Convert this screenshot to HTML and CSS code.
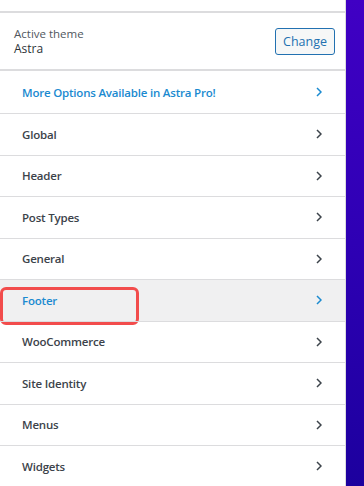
FILE: index.html
```html
<!DOCTYPE html>
<html>
<head>
<meta charset="utf-8">
<link rel="stylesheet" href="styles.css">
</head>
<body>
<div class="frame">
  <div class="panel">
    <div class="top-space"></div>
    <div class="theme">
      <div class="theme-info">
        <div class="theme-label">Active theme</div>
        <div class="theme-name">Astra</div>
      </div>
      <button class="change-btn">Change</button>
    </div>
    <ul class="menu">
      <li class="item pro first"><span>More Options Available in Astra Pro!</span><svg class="chev" viewBox="0 0 6 10"><path d="M1 1l4 4-4 4"/></svg></li>
      <li class="item"><span>Global</span><svg class="chev" viewBox="0 0 6 10"><path d="M1 1l4 4-4 4"/></svg></li>
      <li class="item"><span>Header</span><svg class="chev" viewBox="0 0 6 10"><path d="M1 1l4 4-4 4"/></svg></li>
      <li class="item"><span>Post Types</span><svg class="chev" viewBox="0 0 6 10"><path d="M1 1l4 4-4 4"/></svg></li>
      <li class="item"><span>General</span><svg class="chev" viewBox="0 0 6 10"><path d="M1 1l4 4-4 4"/></svg></li>
      <li class="item active"><span>Footer</span><svg class="chev" viewBox="0 0 6 10"><path d="M1 1l4 4-4 4"/></svg><div class="highlight"></div></li>
      <li class="item"><span>WooCommerce</span><svg class="chev" viewBox="0 0 6 10"><path d="M1 1l4 4-4 4"/></svg></li>
      <li class="item"><span>Site Identity</span><svg class="chev" viewBox="0 0 6 10"><path d="M1 1l4 4-4 4"/></svg></li>
      <li class="item"><span>Menus</span><svg class="chev" viewBox="0 0 6 10"><path d="M1 1l4 4-4 4"/></svg></li>
      <li class="item"><span>Widgets</span><svg class="chev" viewBox="0 0 6 10"><path d="M1 1l4 4-4 4"/></svg></li>
    </ul>
  </div>
  <div class="preview"></div>
</div>
</body>
</html>
```
FILE: styles.css
```css
html, body {
  margin: 0;
  padding: 0;
  height: 100%;
  overflow: hidden;
}
body {
  font-family: "Open Sans", "Noto Sans", sans-serif;
  background: #fff;
}
.frame {
  display: flex;
  height: 486px;
}
.panel {
  width: 345px;
  border-right: 1px solid #dcdcde;
  background: #fff;
  flex-shrink: 0;
}
.preview {
  flex: 1;
  background: linear-gradient(180deg, #4000c4 0%, #2e00b4 50%, #1c009e 100%);
}
.top-space {
  height: 11px;
  border-bottom: 2px solid #dcdcde;
}
.theme {
  height: 56px;
  border-bottom: 2px solid #dcdcde;
  display: flex;
  align-items: center;
  justify-content: space-between;
  padding: 0 10px 0 14px;
}
.theme-label {
  font-size: 11.5px;
  color: #50575e;
  line-height: 15px;
}
.theme-name {
  font-size: 12px;
  color: #2c3338;
  line-height: 15px;
}
.change-btn {
  font-family: inherit;
  font-size: 12.5px;
  color: #2271b1;
  background: #f6f7f7;
  border: 1px solid #2271b1;
  border-radius: 3px;
  height: 27px;
  width: 60px;
  padding: 0;
}
.menu {
  list-style: none;
  margin: 0;
  padding: 0;
}
.item {
  position: relative;
  height: 40.5px;
  border-top: 1px solid #dcdcde;
  display: flex;
  align-items: center;
  justify-content: space-between;
  padding: 0 23px 0 22px;
  font-size: 11.5px;
  font-weight: 600;
  letter-spacing: -0.2px;
  color: #3c434a;
}
.item.first {
  border-top: none;
  height: 42px;
}
.item.pro, .item.active {
  color: #1a8ad0;
}
.item.active {
  background: #f0f0f1;
}
.chev {
  width: 6px;
  height: 10px;
  fill: none;
  stroke: currentColor;
  stroke-width: 1.5;
}
.highlight {
  position: absolute;
  left: 0;
  top: 7px;
  width: 133px;
  height: 32px;
  border: 3px solid #f24c4c;
  border-radius: 6px;
}
```
